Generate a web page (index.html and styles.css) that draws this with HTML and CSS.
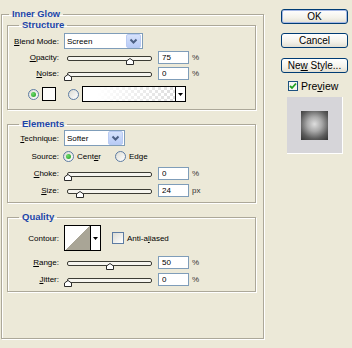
FILE: index.html
```html
<!DOCTYPE html>
<html lang="en">
<head>
    <meta charset="UTF-8">
    <title>Layer Style - Inner Glow</title>
    <link rel="stylesheet" href="styles.css">
</head>
<body>
<div class="dialog">
    <fieldset class="group outer">
        <legend>Inner Glow</legend>

        <!-- Structure -->
        <fieldset class="group structure">
            <legend>Structure</legend>
            <div class="row">
                <span class="lbl"><u>B</u>lend Mode:</span>
                <div class="combo combo-blend">
                    <span class="combo-text">Screen</span>
                    <span class="combo-btn"><svg width="13" height="12" viewBox="0 0 13 12"><path d="M3.5 4.5 L6.5 7.5 L9.5 4.5" fill="none" stroke="#4d6185" stroke-width="2"/></svg></span>
                </div>
            </div>
            <div class="row">
                <span class="lbl"><u>O</u>pacity:</span>
                <div class="slider"><div class="track"><span class="knob" style="left: 75%"><svg width="8" height="7" viewBox="0 0 8 7"><path d="M0.5 6.5 V3 L4 0.5 L7.5 3 V6.5 Z" fill="#fff" stroke="#2b2b2b"/></svg></span></div></div>
                <input class="num" type="text" value="75">
                <span class="unit">%</span>
            </div>
            <div class="row">
                <span class="lbl"><u>N</u>oise:</span>
                <div class="slider"><div class="track"><span class="knob" style="left: 0%"><svg width="8" height="7" viewBox="0 0 8 7"><path d="M0.5 6.5 V3 L4 0.5 L7.5 3 V6.5 Z" fill="#fff" stroke="#2b2b2b"/></svg></span></div></div>
                <input class="num" type="text" value="0">
                <span class="unit">%</span>
            </div>
            <div class="row color-row">
                <span class="radio on"></span>
                <span class="swatch"></span>
                <span class="radio radio-grad"></span>
                <span class="grad"></span>
                <span class="grad-btn"><svg width="5" height="3" viewBox="0 0 5 3"><path d="M0 0 H5 L2.5 3 Z" fill="#000"/></svg></span>
            </div>
        </fieldset>

        <!-- Elements -->
        <fieldset class="group elements">
            <legend>Elements</legend>
            <div class="row">
                <span class="lbl"><u>T</u>echnique:</span>
                <div class="combo combo-tech">
                    <span class="combo-text">Softer</span>
                    <span class="combo-btn"><svg width="13" height="12" viewBox="0 0 13 12"><path d="M3.5 4.5 L6.5 7.5 L9.5 4.5" fill="none" stroke="#4d6185" stroke-width="2"/></svg></span>
                </div>
            </div>
            <div class="row source-row">
                <span class="lbl">Source:</span>
                <span class="radio on"></span>
                <span class="opt">Cent<u>e</u>r</span>
                <span class="radio radio-edge"></span>
                <span class="opt">Edge</span>
            </div>
            <div class="row gap1">
                <span class="lbl"><u>C</u>hoke:</span>
                <div class="slider"><div class="track"><span class="knob" style="left: 0%"><svg width="8" height="7" viewBox="0 0 8 7"><path d="M0.5 6.5 V3 L4 0.5 L7.5 3 V6.5 Z" fill="#fff" stroke="#2b2b2b"/></svg></span></div></div>
                <input class="num" type="text" value="0">
                <span class="unit">%</span>
            </div>
            <div class="row gap1">
                <span class="lbl"><u>S</u>ize:</span>
                <div class="slider"><div class="track"><span class="knob" style="left: 14%"><svg width="8" height="7" viewBox="0 0 8 7"><path d="M0.5 6.5 V3 L4 0.5 L7.5 3 V6.5 Z" fill="#fff" stroke="#2b2b2b"/></svg></span></div></div>
                <input class="num" type="text" value="24">
                <span class="unit">px</span>
            </div>
        </fieldset>

        <!-- Quality -->
        <fieldset class="group quality">
            <legend>Quality</legend>
            <div class="row contour-row">
                <span class="lbl">Contour:</span>
                <div class="contour">
                    <span class="curve"></span>
                    <span class="curve-btn"><svg width="5" height="3" viewBox="0 0 5 3"><path d="M0 0 H5 L2.5 3 Z" fill="#000"/></svg></span>
                </div>
                <span class="check"></span>
                <span class="opt">Anti-a<u>l</u>iased</span>
            </div>
            <div class="row range-row">
                <span class="lbl"><u>R</u>ange:</span>
                <div class="slider"><div class="track"><span class="knob" style="left: 50%"><svg width="8" height="7" viewBox="0 0 8 7"><path d="M0.5 6.5 V3 L4 0.5 L7.5 3 V6.5 Z" fill="#fff" stroke="#2b2b2b"/></svg></span></div></div>
                <input class="num" type="text" value="50">
                <span class="unit">%</span>
            </div>
            <div class="row gap1">
                <span class="lbl"><u>J</u>itter:</span>
                <div class="slider"><div class="track"><span class="knob" style="left: 0%"><svg width="8" height="7" viewBox="0 0 8 7"><path d="M0.5 6.5 V3 L4 0.5 L7.5 3 V6.5 Z" fill="#fff" stroke="#2b2b2b"/></svg></span></div></div>
                <input class="num" type="text" value="0">
                <span class="unit">%</span>
            </div>
        </fieldset>
    </fieldset>

    <!-- buttons and preview -->
    <div class="side">
        <button class="btn btn-default">OK</button>
        <button class="btn btn-cancel">Cancel</button>
        <button class="btn">Ne<u>w</u> Style...</button>
        <div class="preview">
            <span class="check on"><svg width="8" height="8" viewBox="0 0 8 8"><path d="M1 4 L3 6 L7 1.5" fill="none" stroke="#21a121" stroke-width="1.8"/></svg></span>
            <span>Pre<u>v</u>iew</span>
        </div>
        <div class="thumb-box">
            <div class="thumb-glow"></div>
        </div>
    </div>
</div>
</body>
</html>
```

FILE: styles.css
```css
body {
    margin: 0;
    background: #ece9d8;
    font-family: "Liberation Sans", Arial, sans-serif;
    font-size: 8px;
    color: #000;
}
.dialog {
    display: flex;
    align-items: flex-start;
    width: 352px;
    height: 348px;
}
/* group boxes */
.group {
    margin: 0;
    padding: 0;
    min-inline-size: 0;
    border: 1px solid #aca899;
    box-shadow: inset 1px 1px 0 #fff, 1px 1px 0 #fff;
}
.group > legend {
    padding: 0 3px;
    margin-left: 11px;
    font-size: 9.5px;
    font-weight: bold;
    line-height: 12px;
    color: #1b45a8;
}
.outer {
    width: 263px;
    box-sizing: border-box;
    margin: 9px 0 0 1px;
    padding: 0 7px 46px 0;
}
.outer > legend {
    margin-left: 7px;
    line-height: 10px;
    font-size: 9.3px;
}
.structure, .elements, .quality {
    width: 249px;
    box-sizing: border-box;
    margin-left: 5px;
}
.structure {
    padding: 2px 0 7px;
}
.elements {
    margin-top: 8px;
    padding: 0 0 4px;
}
.quality {
    margin-top: 8px;
    padding: 2px 0 4px;
}
/* rows */
.row {
    display: flex;
    align-items: center;
    height: 16px;
}
.gap1 {
    margin-top: 1px;
}
.lbl {
    flex: none;
    width: 51px;
    margin-right: 5px;
    text-align: right;
    white-space: nowrap;
}
/* combo boxes */
.combo {
    display: flex;
    align-items: center;
    justify-content: space-between;
    height: 16px;
    box-sizing: border-box;
    border: 1px solid #7f9db9;
    background: #fff;
    padding: 0 1px 0 2px;
}
.combo-blend {
    width: 79px;
}
.combo-tech {
    width: 61px;
}
.combo-btn {
    display: flex;
    width: 13px;
    height: 12px;
    border: 1px solid #b9cbf3;
    border-radius: 2px;
    background: linear-gradient(#d6e2fb, #b8cbf6);
}
/* sliders */
.slider {
    flex: none;
    width: 91px;
    height: 16px;
    box-sizing: border-box;
    padding: 7px 3px 0;
}
.track {
    position: relative;
    height: 5px;
    box-sizing: border-box;
    border: 1px solid #3c3c34;
    border-radius: 2px;
    background: #f6f5ef;
}
.knob {
    position: absolute;
    top: 1px;
    margin-left: -4px;
    width: 8px;
    height: 7px;
    display: flex;
}
.num {
    width: 31px;
    height: 13px;
    box-sizing: border-box;
    margin: 0 0 0 3px;
    padding: 0 0 0 3px;
    border: 1px solid #7f9db9;
    background: #fff;
    font: 8px "Liberation Sans", Arial, sans-serif;
    color: #000;
    outline: none;
}
.unit {
    margin-left: 3px;
    color: #333;
}
/* radios, swatches */
.radio {
    flex: none;
    width: 11px;
    height: 11px;
    box-sizing: border-box;
    border: 1px solid #5d7ca3;
    border-radius: 50%;
    background: linear-gradient(135deg, #dcdcd4, #fff);
    display: flex;
    align-items: center;
    justify-content: center;
}
.radio.on::after {
    content: "";
    width: 5px;
    height: 5px;
    border-radius: 50%;
    background: radial-gradient(circle at 35% 35%, #6ddc6d, #1f9a1f);
}
.color-row {
    padding-left: 20px;
    margin-top: 5px;
}
.swatch {
    width: 14px;
    height: 14px;
    box-sizing: border-box;
    margin-left: 3px;
    border: 1px solid #000;
    background: #fcfcfa;
}
.radio-grad {
    margin-left: 12px;
}
.grad {
    width: 94px;
    height: 16px;
    box-sizing: border-box;
    margin-left: 3px;
    border: 1px solid #000;
    background:
        linear-gradient(to right, #fff 15%, rgba(255, 255, 255, 0.2)),
        repeating-conic-gradient(#d6d6d6 0 25%, #fff 0 50%) 0 0 / 6px 6px;
}
.grad-btn {
    display: flex;
    align-items: center;
    justify-content: center;
    width: 10px;
    height: 16px;
    box-sizing: border-box;
    border: 1px solid #000;
    border-left: none;
    background: #fff;
}
.source-row {
    margin-top: 2px;
}
.source-row .radio {
    margin-left: -1px;
}
.source-row .radio-edge {
    margin-left: 14px;
}
.opt {
    margin-left: 3px;
    white-space: nowrap;
}
/* contour */
.contour-row {
    height: 26px;
}
.contour {
    display: flex;
    height: 26px;
    box-sizing: border-box;
    border: 1px solid #000;
}
.curve {
    width: 25px;
    background: linear-gradient(to bottom right, #fff 50%, #a9a596 50%);
}
.curve-btn {
    display: flex;
    align-items: center;
    justify-content: center;
    width: 9px;
    border-left: 1px solid #000;
    background: #fff;
}
.check {
    flex: none;
    width: 12px;
    height: 12px;
    box-sizing: border-box;
    margin-left: 11px;
    border: 1px solid #5d7ca3;
    background: linear-gradient(135deg, #dcdcd4, #fff);
    display: flex;
    align-items: center;
    justify-content: center;
}
.range-row {
    margin-top: 3px;
}
/* right side */
.side {
    display: flex;
    flex-direction: column;
    align-items: flex-start;
    width: 67px;
    margin: 9px 0 0 17px;
}
.btn {
    width: 67px;
    height: 15px;
    margin: 0 0 9px;
    padding: 0;
    border: 1px solid #003c74;
    border-radius: 3px;
    background: linear-gradient(#fff, #f4f2ea 60%, #e2dfd2);
    font: 10px "Liberation Sans", Arial, sans-serif;
    line-height: 13px;
    color: #000;
}
.btn-default {
    box-shadow: inset 0 0 0 1px #a6b9e6;
}
.btn-cancel {
    margin-bottom: 10px;
}
.preview {
    display: flex;
    align-items: center;
    height: 16px;
    margin: -4px 0 0 7px;
    font-size: 10.5px;
}
.preview .check {
    width: 10px;
    height: 10px;
    margin: 0 3px 0 0;
    border-color: #1c5180;
    background: #f6f6f2;
}
.thumb-box {
    display: flex;
    align-items: center;
    justify-content: center;
    width: 56px;
    height: 57px;
    box-sizing: border-box;
    margin: 3px 0 0 6px;
    background: #d6d5d9;
    border-right: 1px solid #fff;
    border-bottom: 1px solid #fff;
}
.thumb-glow {
    width: 27px;
    height: 29px;
    background: radial-gradient(circle at 50% 45%, #dedede 0, #a9a9a9 35%, #5c5c5c 70%, #333 100%);
}
```
